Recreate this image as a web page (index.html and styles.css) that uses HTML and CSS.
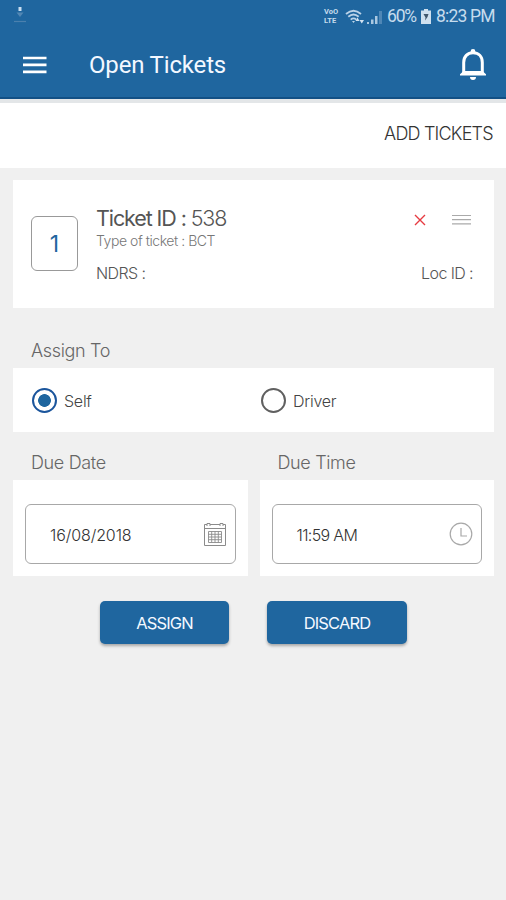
FILE: index.html
```html
<!DOCTYPE html>
<html lang="en">
<head>
<meta charset="utf-8">
<title>Open Tickets</title>
<link rel="stylesheet" href="styles.css">
</head>
<body>
<header class="header">
  <div class="status">
    <svg class="download" width="14" height="18" viewBox="0 0 14 18"><path d="M5.500 1h3v4h-3z" fill="#c9def0"/><path d="M3.500 6.500h7L7 11z" fill="#5287b4"/><path d="M1 15.500h12" stroke="#4b80ae" stroke-width="1.200"/></svg>
    <div class="status-right">
      <span class="volte"><span>VoO</span><span>LTE</span></span>
      <svg class="wifi" width="20" height="16" viewBox="0 0 20 16" fill="none" stroke="#b9d2e8" stroke-width="1.800"><path d="M1 5q7.500-6.500 15 0M3.300 7.800q5.200-4.500 10.400 0M5.700 10.600q2.800-2.400 5.600 0"/><path d="M7 12l1.500 2 1.500-2z" fill="#b9d2e8" stroke="none"/><path d="M10.500 12l2-3.500 2 3.500zM14.500 11h4.500l-2.200 3.500z" fill="#d3e3f2" stroke="none"/></svg>
      <svg class="signal" width="15" height="16" viewBox="0 0 15 16"><path d="M0 13h2v2H0zM4 10.500h2.500V15H4zM8 7h2.500v8H8z" fill="#aac8e1"/><path d="M12 2h3v13h-3z" fill="#4f87b6"/></svg>
      <span class="percent">60%</span>
      <svg class="battery" width="10" height="15" viewBox="0 0 10 15"><path d="M3 0h4v1.500h3V15H0V1.500h3z" fill="#cfe0ef"/><path d="M2.500 5h5l-1 3-2.500 3.500.5-3z" fill="#41576d"/></svg>
      <span class="clock">8:23 PM</span>
    </div>
  </div>
  <div class="toolbar">
    <svg class="menu" width="24" height="18" viewBox="0 0 24 18"><path d="M0 2h23.500M0 8.900h23.500M0 15.800h23.500" stroke="#fff" stroke-width="2.700"/></svg>
    <h1 class="title">Open Tickets</h1>
    <svg class="bell" width="28" height="34" viewBox="0 0 28 34"><path d="M4.700 25V14.500C4.700 8.500 8.500 4.700 14 4.700s9.300 3.800 9.300 9.800V25" fill="none" stroke="#fff" stroke-width="3"/><path d="M11.600 5V3.500a2.400 2.400 0 0 1 4.800 0V5zM1 27.500v-1.300L4.500 23h19l3.500 3.200v1.300zM11 29h6a3 3 0 0 1-6 0z" fill="#fff"/></svg>
  </div>
</header>
<div class="actions"><span class="add">ADD TICKETS</span></div>
<main class="content">
  <section class="ticket">
    <div class="index">1</div>
    <div class="details">
      <div class="row">
        <div class="ticket-id"><b>Ticket ID :</b> 538</div>
        <div class="tools">
          <svg width="12" height="12" viewBox="0 0 12 12"><path d="M1 1l10 10M11 1L1 11" stroke="#e63b41" stroke-width="1.400"/></svg>
          <svg width="19" height="12" viewBox="0 0 19 12"><path d="M0 1.500h19M0 5.700h19M0 9.900h19" stroke="#aaa" stroke-width="1.200"/></svg>
        </div>
      </div>
      <div class="kind">Type of ticket : BCT</div>
      <div class="row meta"><span class="ndrs">NDRS :</span><span class="loc">Loc ID :</span></div>
    </div>
  </section>
  <h2 class="label assign-label">Assign To</h2>
  <section class="choices">
    <div class="choice"><i class="radio on"></i><span>Self</span></div>
    <div class="choice"><i class="radio"></i><span>Driver</span></div>
  </section>
  <div class="due">
    <section>
      <h2 class="label">Due Date</h2>
      <div class="panel"><div class="field"><span class="date">16/08/2018</span>
        <svg width="24" height="26" viewBox="0 0 24 26" fill="none" stroke="#8b8b8b"><path d="M1.500 3.500h21v21h-21zM1.500 7.500h21" stroke-width="1"/><path d="M4 5V2.500h3V5M17 5V2.500h3V5" fill="#fff"/><path d="M5.500 10.500h13v11h-13zM5.500 13.300h13M5.500 16h13M5.500 18.700h13M8.700 10.500v11M12 10.500v11M15.300 10.500v11" stroke-width=".9"/></svg>
      </div></div>
    </section>
    <section>
      <h2 class="label">Due Time</h2>
      <div class="panel"><div class="field"><span class="time">11:59 AM</span>
        <svg width="24" height="26" viewBox="0 0 24 26" fill="none" stroke="#a8a8a8"><circle cx="12" cy="13" r="10.800" stroke-width="1.200"/><path d="M12 7v8h6" stroke-width="1.200"/></svg>
      </div></div>
    </section>
  </div>
  <div class="buttons"><button class="button assign">ASSIGN</button><button class="button discard">DISCARD</button></div>
</main>
</body>
</html>
```

FILE: styles.css
```css
* { box-sizing: border-box; }
body { margin: 0; min-height: 900px; background: #f0f0f0; font-family: Inter, Roboto, sans-serif; color: #555; }
svg { display: block; flex: none; }
span { white-space: nowrap; }
.header { height: 99px; background: #1f669f; border-bottom: 2px solid #125085; }
.status { height: 33px; padding: 0 12px 0 13px; display: flex; justify-content: space-between; align-items: center; }
.download { margin-top: -3px; }
.status-right { display: flex; align-items: center; color: #c6dced; font: 17.5px/33px Roboto, sans-serif; }
.volte { display: flex; flex-direction: column; gap: 1px; width: 15px; font-size: 7.5px; font-weight: 700; line-height: 8px; margin-right: 6px; }
.signal { margin: 0 5px 0 2px; }
.battery { margin: 0 5px 0 5px; }
.percent { letter-spacing: -1.2px; }
.clock { letter-spacing: -.8px; margin-right: -.8px; }
.toolbar { display: flex; align-items: center; height: 64px; padding: 0 19px 0 23px; }
.title { flex: 1; margin: 0 0 0 42px; font: 400 24px/64px Roboto, sans-serif; letter-spacing: -.17px; color: #f3f8ff; }
.actions { height: 69px; padding: 0 14px 4px 0; background: #fff; border-top: 4px solid #e3e6e8; display: flex; justify-content: flex-end; align-items: center; font-size: 18px; color: #333; font-weight: 300; }
.add { letter-spacing: -.8px; margin-right: -.8px; }
.content { padding: 12px 12px 0 13px; }
.ticket { height: 128px; background: #fff; padding: 24px 21px 0 18px; display: flex; gap: 18px; }
.index { width: 47px; height: 55px; margin-top: 12px; border: 1px solid #999; border-radius: 6px; color: #1f669f; font-size: 23px; line-height: 55px; text-align: center; }
.details { flex: 1; }
.row { display: flex; justify-content: space-between; }
.ticket-id { font-size: 21.5px; line-height: 29px; letter-spacing: -1.1px; font-weight: 300; }
.ticket-id b { font-weight: 400; }
.tools { display: flex; align-items: center; gap: 26px; padding: 2px 2px 0 0; }
.kind { font-size: 14px; line-height: 16px; letter-spacing: -.45px; font-weight: 300; color: #777; }
.meta { font-size: 16px; line-height: 20px; margin-top: 14px; letter-spacing: -.6px; font-weight: 350; }
.label { margin: 0; padding-left: 18px; font-size: 18px; line-height: 24px; font-weight: 300; color: #666; letter-spacing: -.35px; }
.assign-label { margin-top: 31px; margin-bottom: 5px; }
.choices { height: 64px; background: #fff; display: flex; padding-left: 19px; font-size: 16px; font-weight: 300; color: #444; letter-spacing: -.25px; }
.choice { width: 229px; display: flex; align-items: center; gap: 7px; }
.choice span { padding-top: 1px; }
.radio { width: 25px; height: 25px; border: 2px solid #606060; border-radius: 50%; }
.radio.on { border-color: #1b559c; background: radial-gradient(circle, #1f669f 0 6px, transparent 6.7px); }
.due { display: grid; grid-template-columns: 1fr 1fr; gap: 12px; margin-top: 19px; }
.panel { height: 96px; background: #fff; padding: 24px 12px 12px; margin-top: 5px; }
.field { height: 60px; border: 1px solid #a8a8a8; border-radius: 6px; display: flex; align-items: center; justify-content: space-between; padding: 0 8px 0 24px; font-size: 16px; font-weight: 300; color: #333; }
.field span { padding-top: 1px; }
.date { letter-spacing: -.1px; }
.time { letter-spacing: -.65px; }
.buttons { display: flex; gap: 38px; padding: 25px 0 0 87px; }
.button { width: 129px; height: 43px; border: 0; border-radius: 5px; padding: 0; background: #1f669f; color: #f4f9ff; font: 400 16.5px Inter, sans-serif; letter-spacing: -.85px; box-shadow: 0 2px 3px rgba(0,0,0,.3); }
.discard { width: 140px; }
```
